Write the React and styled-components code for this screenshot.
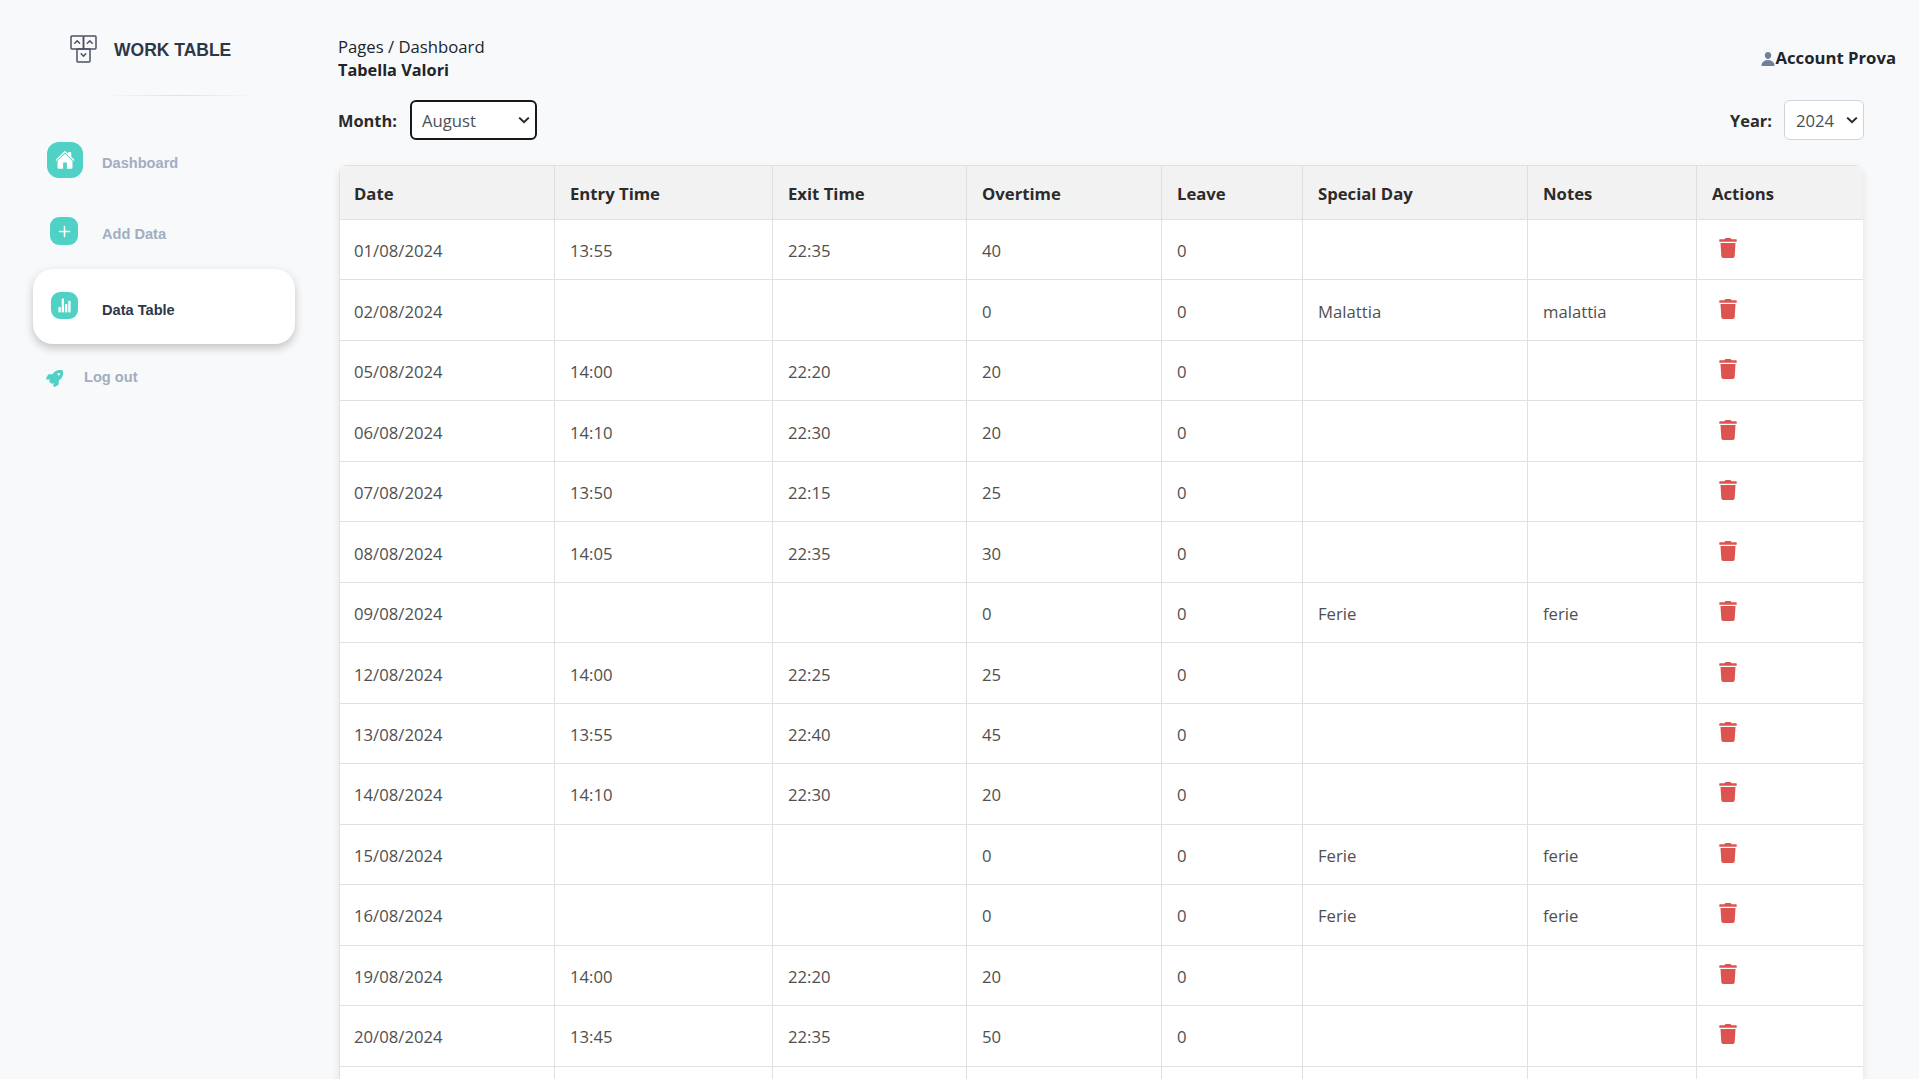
import React from 'react';
import styled, { createGlobalStyle } from 'styled-components';
import { FaRocket, FaTrash } from 'react-icons/fa';
import { IoHome, IoStatsChart, IoPerson } from 'react-icons/io5';
import { Plus } from 'lucide-react';

const chevron = encodeURIComponent(
  '<svg xmlns="http://www.w3.org/2000/svg" width="12" height="8" viewBox="0 0 12 8"><path d="M1.2 1.6 6 6.2l4.8-4.6" fill="none" stroke="#212529" stroke-width="2"/></svg>'
);

const GlobalStyle = createGlobalStyle`
  html, body {
    margin: 0;
    height: 100%;
    overflow: hidden;
    background: #f8f9fb;
  }
  body {
    font-family: "Open Sans", "Noto Sans", sans-serif;
    font-size: 16.7px;
    color: #212529;
  }
`;

const Layout = styled.div`
  display: flex;
  align-items: flex-start;
  min-height: 100vh;
`;

const Sidebar = styled.aside`
  flex: 0 0 339px;
  font-family: "Liberation Sans", Arial, sans-serif;
  font-weight: 700;
`;

const Brand = styled.div`
  display: flex;
  align-items: center;
  gap: 17px;
  padding: 35px 0 0 70px;
  height: 27px;
  font-size: 17.5px;
  color: #2d3748;
`;

const BrandName = styled.span`
  margin-top: 4px;
`;

const BrandRule = styled.div`
  height: 1px;
  width: 160px;
  margin: 33px 0 0 100px;
  background: linear-gradient(90deg, rgba(224, 225, 226, 0), #e0e1e2 50%, rgba(224, 225, 226, 0));
`;

const Nav = styled.nav`
  display: flex;
  flex-direction: column;
  padding-top: 46px;
`;

const NavItem = styled.a`
  display: flex;
  align-items: center;
  box-sizing: border-box;
  margin: ${p => p.$margin};
  height: ${p => p.$height}px;
  width: 262px;
  padding-left: ${p => p.$left}px;
  font-size: 14.6px;
  color: ${p => (p.$active ? '#2d3748' : '#a0aec0')};
  background: ${p => (p.$active ? '#fff' : 'transparent')};
  border-radius: 20px;
  box-shadow: ${p => (p.$active ? '0 4px 10px rgba(0, 0, 0, 0.22)' : 'none')};
`;

const NavLabel = styled.span`
  margin-top: ${p => p.$top}px;
`;

const IconBox = styled.span`
  flex: none;
  display: flex;
  align-items: center;
  justify-content: center;
  width: ${p => p.$size}px;
  height: ${p => p.$size}px;
  margin-right: ${p => p.$gap}px;
  margin-top: ${p => p.$top || 0}px;
  border-radius: ${p => Math.round(p.$size / 3)}px;
  background: #4fd1c5;
  color: #fff;
`;

const RocketIcon = styled(FaRocket)`
  flex: none;
  width: 17px;
  height: 17px;
  margin: 2px 21px 0 0;
  color: #4fd1c5;
`;

const Main = styled.main`
  flex: 1;
  min-width: 0;
  padding: 35px 23px 0 0;
`;

const TopBar = styled.header`
  display: flex;
  justify-content: space-between;
  align-items: center;
  height: 46px;
`;

const Crumbs = styled.div`
  line-height: 23px;
  margin-left: -1px;
`;

const CrumbTitle = styled.div`
  font-weight: 700;
  font-size: 16.3px;
  margin-top: 1px;
`;

const Account = styled.div`
  display: flex;
  align-items: center;
  font-weight: 700;
  margin-top: -2px;
`;

const PersonIcon = styled(IoPerson)`
  width: 16px;
  height: 16px;
  color: #718096;
  margin-top: 4px;
`;

const Filters = styled.div`
  display: flex;
  justify-content: space-between;
  align-items: center;
  margin: 19px 32px 0 -1px;
  height: 40px;
`;

const Filter = styled.label`
  display: flex;
  align-items: center;
  gap: ${p => p.$gap}px;
  font-weight: 700;
  font-size: 16.4px;
  color: #2b2b2b;
`;

const Select = styled.select`
  appearance: none;
  box-sizing: border-box;
  height: 40px;
  width: ${p => p.$width}px;
  padding: 0 0 0 ${p => (p.$focused ? 10 : 11)}px;
  font: inherit;
  font-size: 16.7px;
  font-weight: 400;
  color: #495057;
  background: #fff url("data:image/svg+xml,${chevron}") no-repeat right 5px center;
  border: ${p => (p.$focused ? '2px solid #17191c' : '1px solid #ced4da')};
  border-radius: 6px;
  outline: none;
`;

const TableCard = styled.div`
  width: 1524px;
  margin-top: 25px;
  background: #fff;
  border-radius: 8px 8px 0 0;
  box-shadow: 0 4px 8px rgba(0, 0, 0, 0.1);
  overflow: hidden;
`;

const Table = styled.table`
  width: 100%;
  table-layout: fixed;
  border-collapse: collapse;
`;

const HeadCell = styled.th`
  height: 54px;
  padding: 1px 15px 0;
  box-sizing: border-box;
  text-align: left;
  font-weight: 700;
  color: #2b2b2b;
  background: #f2f2f2;
  border: 1px solid #e0e0e0;

  &:first-child {
    padding-left: 14px;
  }
`;

const Cell = styled.td`
  height: 60.48px;
  padding: 2px 15px 0;
  box-sizing: border-box;
  color: #4f4f4f;
  border: 1px solid #e0e0e0;

  &:first-child {
    padding-left: 14px;
  }
`;

const DeleteButton = styled.button`
  display: block;
  padding: 0;
  margin: -5px 0 0 6px;
  border: 0;
  background: none;
  color: #dc5350;
  line-height: 0;
`;

const columns = [
  ['Date', 215],
  ['Entry Time', 218],
  ['Exit Time', 194],
  ['Overtime', 195],
  ['Leave', 141],
  ['Special Day', 225],
  ['Notes', 169],
  ['Actions', 167],
];

const rows = [
  ['01/08/2024', '13:55', '22:35', '40', '0', '', ''],
  ['02/08/2024', '', '', '0', '0', 'Malattia', 'malattia'],
  ['05/08/2024', '14:00', '22:20', '20', '0', '', ''],
  ['06/08/2024', '14:10', '22:30', '20', '0', '', ''],
  ['07/08/2024', '13:50', '22:15', '25', '0', '', ''],
  ['08/08/2024', '14:05', '22:35', '30', '0', '', ''],
  ['09/08/2024', '', '', '0', '0', 'Ferie', 'ferie'],
  ['12/08/2024', '14:00', '22:25', '25', '0', '', ''],
  ['13/08/2024', '13:55', '22:40', '45', '0', '', ''],
  ['14/08/2024', '14:10', '22:30', '20', '0', '', ''],
  ['15/08/2024', '', '', '0', '0', 'Ferie', 'ferie'],
  ['16/08/2024', '', '', '0', '0', 'Ferie', 'ferie'],
  ['19/08/2024', '14:00', '22:20', '20', '0', '', ''],
  ['20/08/2024', '13:45', '22:35', '50', '0', '', ''],
];

const LogoIcon = () => (
  <svg width="27" height="28" viewBox="0 0 27 28" fill="none" stroke="#4a5163" strokeWidth="1.5" strokeLinejoin="round" strokeLinecap="round">
    <rect x="1" y="1" width="12.5" height="13" rx="1" />
    <rect x="13.5" y="1" width="12.5" height="13" rx="1" />
    <rect x="7" y="14" width="13" height="13" rx="1" />
    <path d="M4.8 8.2 7.2 5.8 9.6 8.2" />
    <path d="M17.4 8.2 19.8 5.8 22.2 8.2" />
    <path d="M11.2 18.8 13.5 21.2 15.8 18.8" />
  </svg>
);

const App = () => (
  <>
    <GlobalStyle />
    <Layout>
      <Sidebar>
        <Brand>
          <LogoIcon />
          <BrandName>WORK TABLE</BrandName>
        </Brand>
        <BrandRule />
        <Nav>
          <NavItem $height={36} $left={47} $margin="0">
            <IconBox $size={36} $gap={19}><IoHome size={20} /></IconBox>
            <NavLabel $top={6}>Dashboard</NavLabel>
          </NavItem>
          <NavItem $height={28} $left={50} $margin="39px 0 0">
            <IconBox $size={28} $gap={24}><Plus size={17} strokeWidth={2.2} /></IconBox>
            <NavLabel $top={5}>Add Data</NavLabel>
          </NavItem>
          <NavItem $active $height={75} $left={18} $margin="24px 0 0 33px">
            <IconBox $size={27} $gap={24} $top={-3}><IoStatsChart size={15} /></IconBox>
            <NavLabel $top={6}>Data Table</NavLabel>
          </NavItem>
          <NavItem $height={20} $left={46} $margin="23px 0 0">
            <RocketIcon />
            Log out
          </NavItem>
        </Nav>
      </Sidebar>
      <Main>
        <TopBar>
          <Crumbs>
            <div>Pages / Dashboard</div>
            <CrumbTitle>Tabella Valori</CrumbTitle>
          </Crumbs>
          <Account>
            <PersonIcon />
            Account Prova
          </Account>
        </TopBar>
        <Filters>
          <Filter $gap={13}>
            Month:
            <Select $focused $width={127} defaultValue="August">
              <option>July</option>
              <option>August</option>
              <option>September</option>
            </Select>
          </Filter>
          <Filter $gap={12}>
            Year:
            <Select $width={80} defaultValue="2024">
              <option>2023</option>
              <option>2024</option>
            </Select>
          </Filter>
        </Filters>
        <TableCard>
          <Table>
            <colgroup>
              {columns.map(([name, width]) => <col key={name} width={width} />)}
            </colgroup>
            <thead>
              <tr>
                {columns.map(([name]) => <HeadCell key={name}>{name}</HeadCell>)}
              </tr>
            </thead>
            <tbody>
              {rows.map(row => (
                <tr key={row[0]}>
                  {row.map((value, i) => <Cell key={i}>{value}</Cell>)}
                  <Cell>
                    <DeleteButton aria-label="Delete"><FaTrash size={20} /></DeleteButton>
                  </Cell>
                </tr>
              ))}
              <tr>
                {columns.map(([name]) => <Cell key={name} />)}
              </tr>
            </tbody>
          </Table>
        </TableCard>
      </Main>
    </Layout>
  </>
);

export default App;
